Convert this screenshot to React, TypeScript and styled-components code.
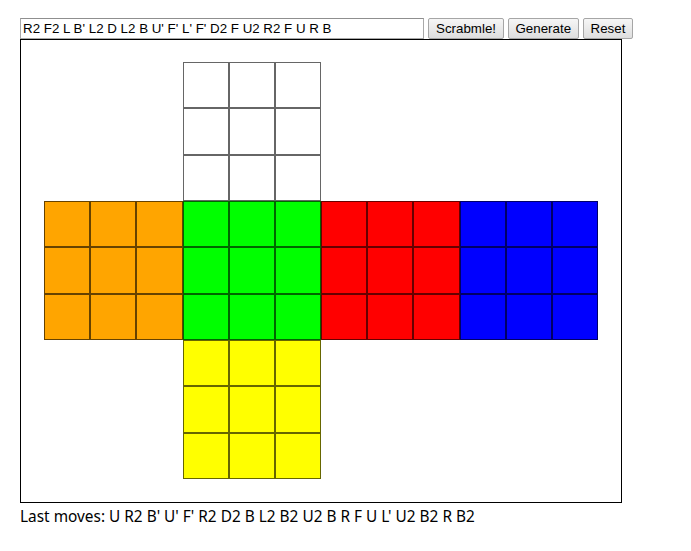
import React from "react";
import styled, { createGlobalStyle } from "styled-components";

const Global = createGlobalStyle`
  html, body { margin: 0; padding: 0; background: #fff; }
  body { font-family: "Liberation Sans", Arial, sans-serif; }
`;

const Page = styled.div`
  padding: 18px 20px 0 20px;
`;

const Toolbar = styled.div`
  display: flex;
  align-items: flex-start;
  gap: 3.5px;
  height: 21px;
`;

const MovesInput = styled.input`
  box-sizing: border-box;
  width: 404px;
  height: 21px;
  margin: 0 0.5px 0 0;
  padding: 1px 2px;
  border: 1px solid #a9a9a9;
  border-top-color: #8f8f8f;
  font-family: "Liberation Sans", Arial, sans-serif;
  font-size: 13.33px;
  color: #000;
  background: #fff;
  outline: none;
`;

const Button = styled.button`
  box-sizing: border-box;
  height: 21px;
  padding: 0 7px;
  margin: 0;
  border: 1px solid #a6a6a6;
  border-radius: 2px;
  background: linear-gradient(#f6f6f6, #dedede);
  font-family: "Liberation Sans", Arial, sans-serif;
  font-size: 13.33px;
  color: #000;
  line-height: 19px;
`;

const Board = styled.div`
  box-sizing: content-box;
  border: 1px solid #000;
  display: grid;
  grid-template-columns: repeat(4, 138.5px);
  grid-template-rows: repeat(3, 139px);
  align-content: start;
  padding-left: 23px;
  padding-top: 22px;
  width: 577px;
  height: 440px;
`;

const Face = styled.div<{ $col: number; $row: number }>`
  grid-column: ${(p) => p.$col};
  grid-row: ${(p) => p.$row};
  display: grid;
  grid-template-columns: repeat(3, 1fr);
  grid-template-rows: repeat(3, 1fr);
`;

const Cell = styled.div<{ $color: string }>`
  box-sizing: border-box;
  background: ${(p) => p.$color};
  border: 1px solid rgba(0, 0, 0, 0.6);
`;

const LastMoves = styled.div`
  margin-top: 3px;
  font-family: "Noto Sans", "Open Sans", sans-serif;
  font-size: 15.4px;
  color: #000;
`;

const faces = [
  { col: 2, row: 1, color: "#ffffff" },
  { col: 1, row: 2, color: "#ffa500" },
  { col: 2, row: 2, color: "#00ff00" },
  { col: 3, row: 2, color: "#ff0000" },
  { col: 4, row: 2, color: "#0000ff" },
  { col: 2, row: 3, color: "#ffff00" },
];

export default function App() {
  return (
    <Page>
      <Global />
      <Toolbar>
        <MovesInput defaultValue="R2 F2 L B' L2 D L2 B U' F' L' F' D2 F U2 R2 F U R B" />
        <Button>Scrabmle!</Button>
        <Button>Generate</Button>
        <Button>Reset</Button>
      </Toolbar>
      <Board>
        {faces.map((f, i) => (
          <Face key={i} $col={f.col} $row={f.row}>
            {Array.from({ length: 9 }).map((_, j) => (
              <Cell key={j} $color={f.color} />
            ))}
          </Face>
        ))}
      </Board>
      <LastMoves>Last moves: U R2 B' U' F' R2 D2 B L2 B2 U2 B R F U L' U2 B2 R B2</LastMoves>
    </Page>
  );
}
